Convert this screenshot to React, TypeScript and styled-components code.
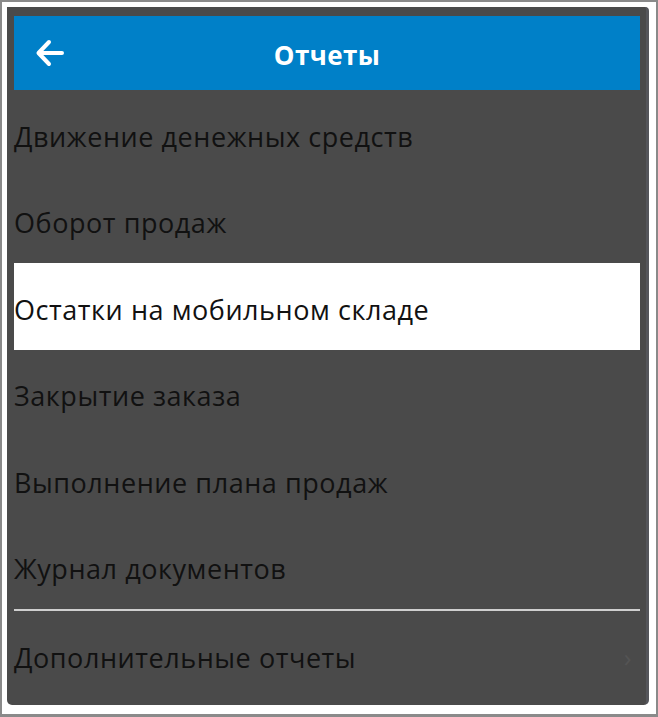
import * as React from "react";
import styled, { createGlobalStyle } from "styled-components";

const GlobalStyle = createGlobalStyle`
  html, body {
    margin: 0;
    padding: 0;
    background: #ffffff;
  }
  body {
    font-family: "Open Sans", "Noto Sans", sans-serif;
  }
`;

const Frame = styled.div`
  box-sizing: border-box;
  width: 658px;
  height: 717px;
  border: 2px solid #8a8a8a;
  border-bottom-width: 3px;
  background: #ffffff;
  padding: 5px 7px 9px 5px;
`;

const Panel = styled.div`
  box-sizing: border-box;
  height: 100%;
  background: #4a4a4a;
  border-right: 3px solid #55565b;
  border-radius: 0 4px 5px 5px;
  padding: 9px 6px 0 7px;
  display: flex;
  flex-direction: column;
`;

const Header = styled.header`
  position: relative;
  height: 74px;
  background: #0080c8;
  display: flex;
  align-items: center;
  justify-content: center;
`;

const BackButton = styled.button`
  position: absolute;
  left: 20px;
  top: 50%;
  transform: translateY(-50%);
  width: 32px;
  height: 32px;
  padding: 0;
  border: none;
  background: transparent;
  display: flex;
  align-items: center;
  justify-content: center;
`;

const Title = styled.h1`
  margin: 4px 0 0 0;
  color: #ffffff;
  font-family: "Open Sans", sans-serif;
  font-weight: 700;
  font-size: 26px;
  letter-spacing: 0.4px;
`;

const List = styled.div`
  display: flex;
  flex-direction: column;
`;

const Row = styled.div<{ $active?: boolean }>`
  height: 86.5px;
  display: flex;
  align-items: center;
  justify-content: space-between;
  padding-top: 6px;
  box-sizing: border-box;
  background: ${(p) => (p.$active ? "#ffffff" : "transparent")};
  color: #111111;
  font-family: "Open Sans", sans-serif;
  font-size: 27px;
  letter-spacing: 0.55px;
  white-space: nowrap;
`;

const Divider = styled.div`
  height: 2px;
  background: #cfcfcf;
`;

const Chevron = styled.span`
  color: #545454;
  font-size: 26px;
  margin-right: 8px;
`;

const items = [
  "Движение денежных средств",
  "Оборот продаж",
  "Остатки на мобильном складе",
  "Закрытие заказа",
  "Выполнение плана продаж",
  "Журнал документов",
];

export default function App() {
  return (
    <>
      <GlobalStyle />
      <Frame>
        <Panel>
          <Header>
            <BackButton aria-label="Назад">
              <svg width="30" height="28" viewBox="0 0 30 28" fill="none">
                <path
                  d="M27 14H4M14 3L3.5 14L14 25"
                  stroke="#ffffff"
                  strokeWidth="4"
                  strokeLinecap="round"
                  strokeLinejoin="round"
                />
              </svg>
            </BackButton>
            <Title>Отчеты</Title>
          </Header>
          <List>
            {items.map((t, i) => (
              <Row key={t} $active={i === 2}>
                {t}
              </Row>
            ))}
            <Divider />
            <Row>
              Дополнительные отчеты
              <Chevron>›</Chevron>
            </Row>
          </List>
        </Panel>
      </Frame>
    </>
  );
}
